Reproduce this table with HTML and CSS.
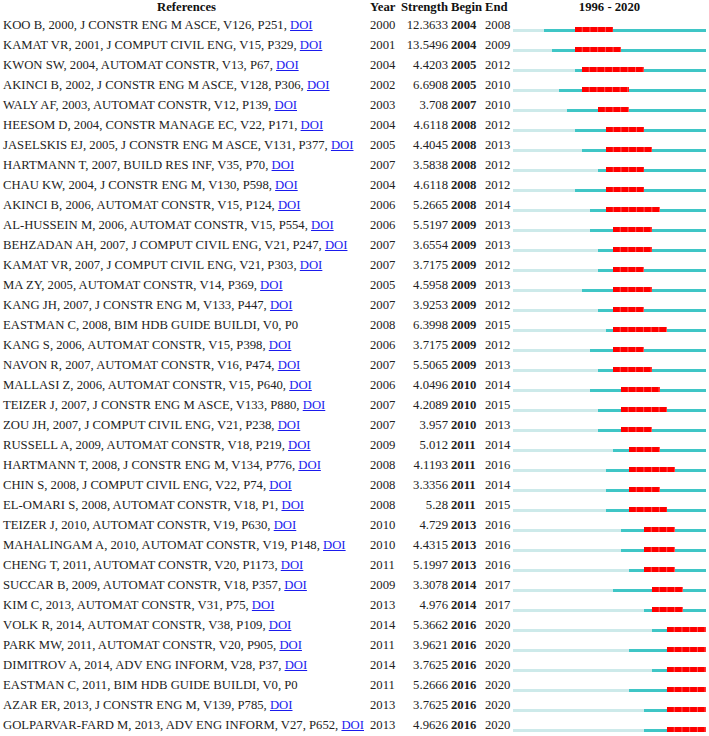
FILE: index.html
```html
<!DOCTYPE html>
<html>
<head>
<meta charset="utf-8">
<link rel="stylesheet" href="styles.css">
</head>
<body>
<div class="table">
  <div class="row head">
    <div class="c-ref center">References</div>
    <div class="c-year">Year</div>
    <div class="c-str">Strength</div>
    <div class="c-beg">Begin</div>
    <div class="c-end">End</div>
    <div class="c-bar center">1996 - 2020</div>
  </div>

  <div class="row"><div class="c-ref">KOO B, 2000, J CONSTR ENG M ASCE, V126, P251, <a href="#">DOI</a></div><div class="c-year">2000</div><div class="c-str">12.3633</div><div class="c-beg">2004</div><div class="c-end">2008</div><div class="c-bar"><span class="lt" style="width:16%"></span><span class="tl" style="width:16%"></span><span class="rd" style="width:20%"></span><span class="tl rest"></span></div></div>
  <div class="row"><div class="c-ref">KAMAT VR, 2001, J COMPUT CIVIL ENG, V15, P329, <a href="#">DOI</a></div><div class="c-year">2001</div><div class="c-str">13.5496</div><div class="c-beg">2004</div><div class="c-end">2009</div><div class="c-bar"><span class="lt" style="width:20%"></span><span class="tl" style="width:12%"></span><span class="rd" style="width:24%"></span><span class="tl rest"></span></div></div>
  <div class="row"><div class="c-ref">KWON SW, 2004, AUTOMAT CONSTR, V13, P67, <a href="#">DOI</a></div><div class="c-year">2004</div><div class="c-str">4.4203</div><div class="c-beg">2005</div><div class="c-end">2012</div><div class="c-bar"><span class="lt" style="width:32%"></span><span class="tl" style="width:4%"></span><span class="rd" style="width:32%"></span><span class="tl rest"></span></div></div>
  <div class="row"><div class="c-ref">AKINCI B, 2002, J CONSTR ENG M ASCE, V128, P306, <a href="#">DOI</a></div><div class="c-year">2002</div><div class="c-str">6.6908</div><div class="c-beg">2005</div><div class="c-end">2010</div><div class="c-bar"><span class="lt" style="width:24%"></span><span class="tl" style="width:12%"></span><span class="rd" style="width:24%"></span><span class="tl rest"></span></div></div>
  <div class="row"><div class="c-ref">WALY AF, 2003, AUTOMAT CONSTR, V12, P139, <a href="#">DOI</a></div><div class="c-year">2003</div><div class="c-str">3.708</div><div class="c-beg">2007</div><div class="c-end">2010</div><div class="c-bar"><span class="lt" style="width:28%"></span><span class="tl" style="width:16%"></span><span class="rd" style="width:16%"></span><span class="tl rest"></span></div></div>
  <div class="row"><div class="c-ref">HEESOM D, 2004, CONSTR MANAGE EC, V22, P171, <a href="#">DOI</a></div><div class="c-year">2004</div><div class="c-str">4.6118</div><div class="c-beg">2008</div><div class="c-end">2012</div><div class="c-bar"><span class="lt" style="width:32%"></span><span class="tl" style="width:16%"></span><span class="rd" style="width:20%"></span><span class="tl rest"></span></div></div>
  <div class="row"><div class="c-ref">JASELSKIS EJ, 2005, J CONSTR ENG M ASCE, V131, P377, <a href="#">DOI</a></div><div class="c-year">2005</div><div class="c-str">4.4045</div><div class="c-beg">2008</div><div class="c-end">2013</div><div class="c-bar"><span class="lt" style="width:36%"></span><span class="tl" style="width:12%"></span><span class="rd" style="width:24%"></span><span class="tl rest"></span></div></div>
  <div class="row"><div class="c-ref">HARTMANN T, 2007, BUILD RES INF, V35, P70, <a href="#">DOI</a></div><div class="c-year">2007</div><div class="c-str">3.5838</div><div class="c-beg">2008</div><div class="c-end">2012</div><div class="c-bar"><span class="lt" style="width:44%"></span><span class="tl" style="width:4%"></span><span class="rd" style="width:20%"></span><span class="tl rest"></span></div></div>
  <div class="row"><div class="c-ref">CHAU KW, 2004, J CONSTR ENG M, V130, P598, <a href="#">DOI</a></div><div class="c-year">2004</div><div class="c-str">4.6118</div><div class="c-beg">2008</div><div class="c-end">2012</div><div class="c-bar"><span class="lt" style="width:32%"></span><span class="tl" style="width:16%"></span><span class="rd" style="width:20%"></span><span class="tl rest"></span></div></div>
  <div class="row"><div class="c-ref">AKINCI B, 2006, AUTOMAT CONSTR, V15, P124, <a href="#">DOI</a></div><div class="c-year">2006</div><div class="c-str">5.2665</div><div class="c-beg">2008</div><div class="c-end">2014</div><div class="c-bar"><span class="lt" style="width:40%"></span><span class="tl" style="width:8%"></span><span class="rd" style="width:28%"></span><span class="tl rest"></span></div></div>
  <div class="row"><div class="c-ref">AL-HUSSEIN M, 2006, AUTOMAT CONSTR, V15, P554, <a href="#">DOI</a></div><div class="c-year">2006</div><div class="c-str">5.5197</div><div class="c-beg">2009</div><div class="c-end">2013</div><div class="c-bar"><span class="lt" style="width:40%"></span><span class="tl" style="width:12%"></span><span class="rd" style="width:20%"></span><span class="tl rest"></span></div></div>
  <div class="row"><div class="c-ref">BEHZADAN AH, 2007, J COMPUT CIVIL ENG, V21, P247, <a href="#">DOI</a></div><div class="c-year">2007</div><div class="c-str">3.6554</div><div class="c-beg">2009</div><div class="c-end">2013</div><div class="c-bar"><span class="lt" style="width:44%"></span><span class="tl" style="width:8%"></span><span class="rd" style="width:20%"></span><span class="tl rest"></span></div></div>
  <div class="row"><div class="c-ref">KAMAT VR, 2007, J COMPUT CIVIL ENG, V21, P303, <a href="#">DOI</a></div><div class="c-year">2007</div><div class="c-str">3.7175</div><div class="c-beg">2009</div><div class="c-end">2012</div><div class="c-bar"><span class="lt" style="width:44%"></span><span class="tl" style="width:8%"></span><span class="rd" style="width:16%"></span><span class="tl rest"></span></div></div>
  <div class="row"><div class="c-ref">MA ZY, 2005, AUTOMAT CONSTR, V14, P369, <a href="#">DOI</a></div><div class="c-year">2005</div><div class="c-str">4.5958</div><div class="c-beg">2009</div><div class="c-end">2013</div><div class="c-bar"><span class="lt" style="width:36%"></span><span class="tl" style="width:16%"></span><span class="rd" style="width:20%"></span><span class="tl rest"></span></div></div>
  <div class="row"><div class="c-ref">KANG JH, 2007, J CONSTR ENG M, V133, P447, <a href="#">DOI</a></div><div class="c-year">2007</div><div class="c-str">3.9253</div><div class="c-beg">2009</div><div class="c-end">2012</div><div class="c-bar"><span class="lt" style="width:44%"></span><span class="tl" style="width:8%"></span><span class="rd" style="width:16%"></span><span class="tl rest"></span></div></div>
  <div class="row"><div class="c-ref">EASTMAN C, 2008, BIM HDB GUIDE BUILDI, V0, P0</div><div class="c-year">2008</div><div class="c-str">6.3998</div><div class="c-beg">2009</div><div class="c-end">2015</div><div class="c-bar"><span class="lt" style="width:48%"></span><span class="tl" style="width:4%"></span><span class="rd" style="width:28%"></span><span class="tl rest"></span></div></div>
  <div class="row"><div class="c-ref">KANG S, 2006, AUTOMAT CONSTR, V15, P398, <a href="#">DOI</a></div><div class="c-year">2006</div><div class="c-str">3.7175</div><div class="c-beg">2009</div><div class="c-end">2012</div><div class="c-bar"><span class="lt" style="width:40%"></span><span class="tl" style="width:12%"></span><span class="rd" style="width:16%"></span><span class="tl rest"></span></div></div>
  <div class="row"><div class="c-ref">NAVON R, 2007, AUTOMAT CONSTR, V16, P474, <a href="#">DOI</a></div><div class="c-year">2007</div><div class="c-str">5.5065</div><div class="c-beg">2009</div><div class="c-end">2013</div><div class="c-bar"><span class="lt" style="width:44%"></span><span class="tl" style="width:8%"></span><span class="rd" style="width:20%"></span><span class="tl rest"></span></div></div>
  <div class="row"><div class="c-ref">MALLASI Z, 2006, AUTOMAT CONSTR, V15, P640, <a href="#">DOI</a></div><div class="c-year">2006</div><div class="c-str">4.0496</div><div class="c-beg">2010</div><div class="c-end">2014</div><div class="c-bar"><span class="lt" style="width:40%"></span><span class="tl" style="width:16%"></span><span class="rd" style="width:20%"></span><span class="tl rest"></span></div></div>
  <div class="row"><div class="c-ref">TEIZER J, 2007, J CONSTR ENG M ASCE, V133, P880, <a href="#">DOI</a></div><div class="c-year">2007</div><div class="c-str">4.2089</div><div class="c-beg">2010</div><div class="c-end">2015</div><div class="c-bar"><span class="lt" style="width:44%"></span><span class="tl" style="width:12%"></span><span class="rd" style="width:24%"></span><span class="tl rest"></span></div></div>
  <div class="row"><div class="c-ref">ZOU JH, 2007, J COMPUT CIVIL ENG, V21, P238, <a href="#">DOI</a></div><div class="c-year">2007</div><div class="c-str">3.957</div><div class="c-beg">2010</div><div class="c-end">2013</div><div class="c-bar"><span class="lt" style="width:44%"></span><span class="tl" style="width:12%"></span><span class="rd" style="width:16%"></span><span class="tl rest"></span></div></div>
  <div class="row"><div class="c-ref">RUSSELL A, 2009, AUTOMAT CONSTR, V18, P219, <a href="#">DOI</a></div><div class="c-year">2009</div><div class="c-str">5.012</div><div class="c-beg">2011</div><div class="c-end">2014</div><div class="c-bar"><span class="lt" style="width:52%"></span><span class="tl" style="width:8%"></span><span class="rd" style="width:16%"></span><span class="tl rest"></span></div></div>
  <div class="row"><div class="c-ref">HARTMANN T, 2008, J CONSTR ENG M, V134, P776, <a href="#">DOI</a></div><div class="c-year">2008</div><div class="c-str">4.1193</div><div class="c-beg">2011</div><div class="c-end">2016</div><div class="c-bar"><span class="lt" style="width:48%"></span><span class="tl" style="width:12%"></span><span class="rd" style="width:24%"></span><span class="tl rest"></span></div></div>
  <div class="row"><div class="c-ref">CHIN S, 2008, J COMPUT CIVIL ENG, V22, P74, <a href="#">DOI</a></div><div class="c-year">2008</div><div class="c-str">3.3356</div><div class="c-beg">2011</div><div class="c-end">2014</div><div class="c-bar"><span class="lt" style="width:48%"></span><span class="tl" style="width:12%"></span><span class="rd" style="width:16%"></span><span class="tl rest"></span></div></div>
  <div class="row"><div class="c-ref">EL-OMARI S, 2008, AUTOMAT CONSTR, V18, P1, <a href="#">DOI</a></div><div class="c-year">2008</div><div class="c-str">5.28</div><div class="c-beg">2011</div><div class="c-end">2015</div><div class="c-bar"><span class="lt" style="width:48%"></span><span class="tl" style="width:12%"></span><span class="rd" style="width:20%"></span><span class="tl rest"></span></div></div>
  <div class="row"><div class="c-ref">TEIZER J, 2010, AUTOMAT CONSTR, V19, P630, <a href="#">DOI</a></div><div class="c-year">2010</div><div class="c-str">4.729</div><div class="c-beg">2013</div><div class="c-end">2016</div><div class="c-bar"><span class="lt" style="width:56%"></span><span class="tl" style="width:12%"></span><span class="rd" style="width:16%"></span><span class="tl rest"></span></div></div>
  <div class="row"><div class="c-ref">MAHALINGAM A, 2010, AUTOMAT CONSTR, V19, P148, <a href="#">DOI</a></div><div class="c-year">2010</div><div class="c-str">4.4315</div><div class="c-beg">2013</div><div class="c-end">2016</div><div class="c-bar"><span class="lt" style="width:56%"></span><span class="tl" style="width:12%"></span><span class="rd" style="width:16%"></span><span class="tl rest"></span></div></div>
  <div class="row"><div class="c-ref">CHENG T, 2011, AUTOMAT CONSTR, V20, P1173, <a href="#">DOI</a></div><div class="c-year">2011</div><div class="c-str">5.1997</div><div class="c-beg">2013</div><div class="c-end">2016</div><div class="c-bar"><span class="lt" style="width:60%"></span><span class="tl" style="width:8%"></span><span class="rd" style="width:16%"></span><span class="tl rest"></span></div></div>
  <div class="row"><div class="c-ref">SUCCAR B, 2009, AUTOMAT CONSTR, V18, P357, <a href="#">DOI</a></div><div class="c-year">2009</div><div class="c-str">3.3078</div><div class="c-beg">2014</div><div class="c-end">2017</div><div class="c-bar"><span class="lt" style="width:52%"></span><span class="tl" style="width:20%"></span><span class="rd" style="width:16%"></span><span class="tl rest"></span></div></div>
  <div class="row"><div class="c-ref">KIM C, 2013, AUTOMAT CONSTR, V31, P75, <a href="#">DOI</a></div><div class="c-year">2013</div><div class="c-str">4.976</div><div class="c-beg">2014</div><div class="c-end">2017</div><div class="c-bar"><span class="lt" style="width:68%"></span><span class="tl" style="width:4%"></span><span class="rd" style="width:16%"></span><span class="tl rest"></span></div></div>
  <div class="row"><div class="c-ref">VOLK R, 2014, AUTOMAT CONSTR, V38, P109, <a href="#">DOI</a></div><div class="c-year">2014</div><div class="c-str">5.3662</div><div class="c-beg">2016</div><div class="c-end">2020</div><div class="c-bar"><span class="lt" style="width:72%"></span><span class="tl" style="width:8%"></span><span class="rd" style="width:20%"></span></div></div>
  <div class="row"><div class="c-ref">PARK MW, 2011, AUTOMAT CONSTR, V20, P905, <a href="#">DOI</a></div><div class="c-year">2011</div><div class="c-str">3.9621</div><div class="c-beg">2016</div><div class="c-end">2020</div><div class="c-bar"><span class="lt" style="width:60%"></span><span class="tl" style="width:20%"></span><span class="rd" style="width:20%"></span></div></div>
  <div class="row"><div class="c-ref">DIMITROV A, 2014, ADV ENG INFORM, V28, P37, <a href="#">DOI</a></div><div class="c-year">2014</div><div class="c-str">3.7625</div><div class="c-beg">2016</div><div class="c-end">2020</div><div class="c-bar"><span class="lt" style="width:72%"></span><span class="tl" style="width:8%"></span><span class="rd" style="width:20%"></span></div></div>
  <div class="row"><div class="c-ref">EASTMAN C, 2011, BIM HDB GUIDE BUILDI, V0, P0</div><div class="c-year">2011</div><div class="c-str">5.2666</div><div class="c-beg">2016</div><div class="c-end">2020</div><div class="c-bar"><span class="lt" style="width:60%"></span><span class="tl" style="width:20%"></span><span class="rd" style="width:20%"></span></div></div>
  <div class="row"><div class="c-ref">AZAR ER, 2013, J CONSTR ENG M, V139, P785, <a href="#">DOI</a></div><div class="c-year">2013</div><div class="c-str">3.7625</div><div class="c-beg">2016</div><div class="c-end">2020</div><div class="c-bar"><span class="lt" style="width:68%"></span><span class="tl" style="width:12%"></span><span class="rd" style="width:20%"></span></div></div>
  <div class="row"><div class="c-ref">GOLPARVAR-FARD M, 2013, ADV ENG INFORM, V27, P652, <a href="#">DOI</a></div><div class="c-year">2013</div><div class="c-str">4.9626</div><div class="c-beg">2016</div><div class="c-end">2020</div><div class="c-bar"><span class="lt" style="width:68%"></span><span class="tl" style="width:12%"></span><span class="rd" style="width:20%"></span></div></div>
</div>
</body>
</html>
```

FILE: styles.css
```css
html, body {
  margin: 0;
  padding: 0;
  background: #ffffff;
}

body {
  font-family: "Liberation Serif", "Times New Roman", serif;
  font-size: 12.7px;
  color: #222222;
}

.table {
  display: flex;
  flex-direction: column;
  padding-left: 3px;
}

.row {
  display: grid;
  grid-template-columns: 367px 29px 49px 37px 28px 193px;
  height: 20px;
  line-height: 20px;
  white-space: nowrap;
}

.row.head {
  height: 15px;
  line-height: 15px;
  font-weight: bold;
  color: #111111;
}

.center {
  text-align: center;
}

.c-ref a {
  color: #1a1aee;
  text-decoration: underline;
}

.c-str {
  text-align: right;
}

.c-beg {
  padding-left: 3px;
}

.row:not(.head) .c-beg {
  font-weight: bold;
}

.row:not(.head) .c-bar {
  display: flex;
  align-items: flex-end;
  padding-bottom: 3px;
}

.lt,
.tl,
.rd {
  display: block;
  flex: none;
}

.lt {
  height: 3px;
  background: #cdeaea;
}

.tl {
  height: 3px;
  background: #3fc6c6;
}

.tl.rest {
  flex: 1 1 auto;
}

.rd {
  height: 5px;
  background-color: #ff0000;
  background-image: linear-gradient(to right, #ff0000 calc(100% - 1px), #ff5c5c calc(100% - 1px));
  background-size: 7.72px 100%;
}
```
